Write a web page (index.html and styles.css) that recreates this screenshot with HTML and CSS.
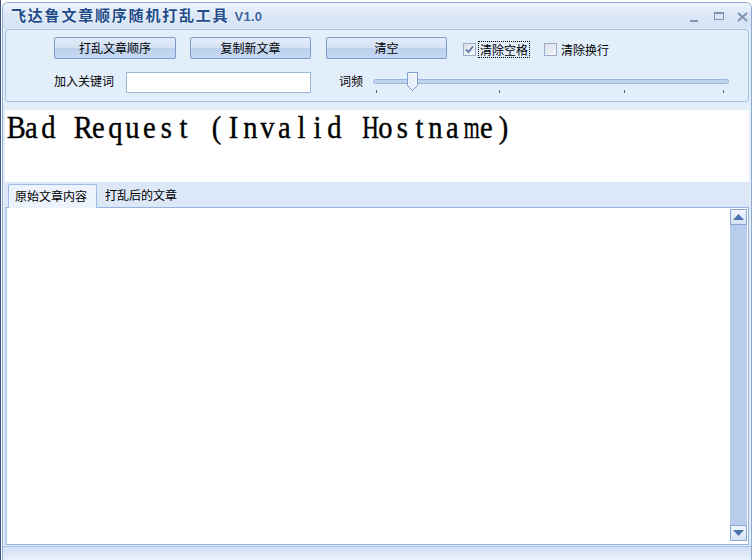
FILE: index.html
```html
<!DOCTYPE html>
<html>
<head>
<meta charset="utf-8">
<link rel="stylesheet" href="styles.css">
</head>
<body>
<div class="desk">
  <div class="window">
    <div class="titlebar">
      <span class="title">飞达鲁文章顺序随机打乱工具 <span class="ver">V1.0</span></span>
      <div class="controls">
        <span class="ctl min"></span>
        <span class="ctl max"></span>
        <svg class="ctl close" width="11" height="10" viewBox="0 0 11 10"><path d="M1 1 L10 9 M10 1 L1 9" stroke="#8194b2" stroke-width="2"/></svg>
      </div>
    </div>
    <div class="group">
      <div class="row1">
        <button class="btn b1">打乱文章顺序</button>
        <button class="btn b2">复制新文章</button>
        <button class="btn b3">清空</button>
        <span class="chk checked"><svg width="9" height="9" viewBox="0 0 9 9"><path d="M1 4.5 L3.5 7 L8 1.5" fill="none" stroke="#4f6f9f" stroke-width="1.6"/></svg></span>
        <span class="lbl focus">清除空格</span>
        <span class="chk c2"></span>
        <span class="lbl">清除换行</span>
      </div>
      <div class="row2">
        <span class="kw">加入关键词</span>
        <span class="input"></span>
        <span class="freq">词频</span>
        <div class="slider">
          <div class="track"></div>
          <div class="thumb"><svg width="11" height="19" viewBox="0 0 11 19"><path d="M0.5 0.5 H10.5 V13.5 L5.5 18.5 L0.5 13.5 Z" fill="#eaf1fb" stroke="#7d9ccb"/><path d="M2 2 H9 V13" fill="none" stroke="#ffffff"/></svg></div>
          <div class="ticks"><i class="t1"></i><i class="t2"></i><i class="t3"></i><i class="t4"></i></div>
        </div>
      </div>
    </div>
    <div class="web"><span>B</span><span>a</span><span>d</span><span> </span><span>R</span><span>e</span><span>q</span><span>u</span><span>e</span><span>s</span><span>t</span><span> </span><span>(</span><span>I</span><span>n</span><span>v</span><span>a</span><span>l</span><span>i</span><span>d</span><span> </span><span class="h">H</span><span>o</span><span>s</span><span>t</span><span>n</span><span>a</span><span class="w">m</span><span>e</span><span>)</span></div>
    <div class="tabs">
      <span class="tab active">原始文章内容</span>
      <span class="tab">打乱后的文章</span>
    </div>
    <div class="page">
      <div class="text"></div>
      <div class="scroll">
        <div class="sbtn"><svg width="11" height="6" viewBox="0 0 11 6"><path d="M0 6 L5.5 0 L11 6 Z" fill="#4f73ad"/></svg></div>
        <div class="strack"></div>
        <div class="sbtn"><svg width="11" height="6" viewBox="0 0 11 6"><path d="M0 0 L5.5 6 L11 0 Z" fill="#4f73ad"/></svg></div>
      </div>
    </div>
    <div class="status"></div>
  </div>
</div>
</body>
</html>
```
FILE: styles.css
```css
* { box-sizing: border-box; }
html, body { margin: 0; padding: 0; }
body {
  width: 752px;
  height: 560px;
  overflow: hidden;
  background: #ffffff;
  font-family: "Noto Sans CJK SC", "DejaVu Sans", sans-serif;
  font-size: 12px;
  color: #000;
}
.desk {
  height: 560px;
  border-left: 1px solid #3a5186;
  padding-top: 2px;
  padding-left: 1px;
}
.window {
  width: 750px;
  height: 558px;
  background: #e2edfa;
  border: 1px solid #8ea9d0;
  border-bottom: none;
  border-radius: 6px 6px 0 0;
  display: flex;
  flex-direction: column;
  padding: 0 1px;
}
.titlebar {
  height: 25px;
  flex: none;
  display: flex;
  align-items: center;
  justify-content: space-between;
  background: linear-gradient(#eef4fc, #dbe7f7 45%, #d4e3f6);
  margin: 0 -1px;
  border-radius: 5px 5px 0 0;
  padding: 0 0 0 8px;
}
.title {
  font-weight: bold;
  font-size: 15px;
  color: #1f4c8a;
  letter-spacing: 1.8px;
  text-shadow: 0 0 3px #ffffff;
  line-height: 20px;
  margin-top: 1px;
  white-space: nowrap;
}
.ver {
  font-family: "Liberation Sans", "DejaVu Sans", sans-serif;
  font-size: 13px;
  letter-spacing: 0.2px;
  color: #3a64a0;
}
.controls {
  display: flex;
  align-items: center;
  padding-right: 3px;
  height: 25px;
}
.ctl { display: block; }
.min {
  width: 8px; height: 2px;
  background: #8194b2;
  margin-top: 10px;
  margin-right: 16px;
}
.max {
  width: 10px; height: 8px;
  border: 1px solid #8194b2;
  border-top-width: 2px;
  margin-right: 13px;
  margin-top: 1px;
}
.close { margin-top: 2px; }
.group {
  flex: none;
  height: 73px;
  margin: 1px 1px 0 1px;
  border: 1px solid #a8c2e6;
  border-radius: 3px;
  background: #e3eefb;
  padding: 7px 0 0 48px;
}
.row1 {
  display: flex;
  align-items: center;
  height: 22px;
}
.btn {
  font-family: inherit;
  font-size: 12px;
  height: 22px;
  padding: 0;
  border: 1px solid #7e9ac6;
  border-radius: 2px;
  background: linear-gradient(#e4edf9, #d3e1f4 50%, #bdd1ee 51%, #c6d8f1);
  color: #000;
  line-height: 18px;
}
.b1 { width: 122px; }
.b2 { width: 121px; margin-left: 14px; }
.b3 { width: 121px; margin-left: 15px; }
.chk {
  width: 13px; height: 13px;
  border: 1px solid #9aaecb;
  background: linear-gradient(135deg, #d8dde6, #f6f8fb);
  display: flex;
  align-items: center;
  justify-content: center;
  margin-top: 2px;
}
.checked { margin-left: 16px; }
.c2 { margin-left: 15px; }
.lbl {
  margin-left: 3px;
  padding: 0 1px;
  line-height: 15px;
  margin-top: 2px;
}
.focus { outline: 1px dotted #000; outline-offset: 0; }
.row2 {
  display: flex;
  align-items: flex-start;
  margin-top: 13px;
  height: 30px;
}
.kw { line-height: 20px; margin-top: -1px; }
.input {
  width: 185px;
  height: 21px;
  border: 1px solid #9cb6dc;
  background: #ffffff;
  margin-left: 12px;
}
.freq { margin-left: 28px; line-height: 20px; margin-top: -1px; }
.slider {
  margin-left: 10px;
  width: 356px;
  height: 28px;
  display: flex;
  flex-direction: column;
  position: relative;
}
.track {
  margin-top: 7px;
  height: 5px;
  border: 1px solid #9ab5dd;
  border-radius: 3px;
  background: #c2d5ef;
}
.thumb {
  position: absolute;
  left: 34px;
  top: 0;
  width: 11px;
  height: 19px;
}
.thumb svg { display: block; }
.ticks {
  display: flex;
  margin-top: 6px;
}
.ticks i {
  display: block;
  width: 1px;
  height: 3px;
  background: #4c5f7c;
}
.t1 { margin-left: 3px; }
.t2 { margin-left: 122px; }
.t3 { margin-left: 124px; }
.t4 { margin-left: 98px; }
.web {
  flex: none;
  height: 72px;
  margin: 8px 1px 0 1px;
  background: #ffffff;
  font-family: "Liberation Serif", "DejaVu Serif", serif;
  font-size: 31px;
  line-height: 36px;
  padding-left: 1px;
  white-space: nowrap;
  overflow: hidden;
  color: #000;
  display: flex;
  align-items: flex-start;
  -webkit-text-stroke: 0.4px #000;
}
.web span {
  display: block;
  width: 16.87px;
  flex: none;
  text-align: center;
  white-space: pre;
  transform: scaleX(0.92);
}
.web span.h { transform: scaleX(0.74); }
.web span.w { transform: scaleX(0.66); }
.tabs {
  flex: none;
  height: 26px;
  margin: 0 1px;
  background: #dce8f8;
  display: flex;
  align-items: flex-end;
  padding-left: 3px;
  border-bottom: 1px solid #96b4de;
}
.tab {
  height: 23px;
  line-height: 22px;
  padding: 0 8px;
}
.tab.active {
  width: 89px;
  padding: 0 0 0 6px;
  background: #ecf3fc;
  border: 1px solid #9fbbe2;
  border-bottom: none;
  border-radius: 2px 2px 0 0;
  height: 24px;
  margin-bottom: -1px;
}
.tab + .tab { padding-left: 8px; }
.page {
  flex: none;
  height: 337px;
  margin: 0 1px;
  border: 1px solid #96b4de;
  border-top: none;
  background: #ffffff;
  display: flex;
  padding: 1px 1px 3px 2px;
  border-left: 2px solid #b9cfee;
}
.text { flex: 1; background: #ffffff; }
.scroll {
  width: 17px;
  display: flex;
  flex-direction: column;
  background: #b8cdec;
}
.sbtn {
  height: 16px;
  border: 1px solid #86a6d6;
  background: linear-gradient(#f2f6fd, #d5e3f6);
  display: flex;
  align-items: center;
  justify-content: center;
}
.strack { flex: 1; background: #b8cdec; }
.status {
  flex: 1;
  margin: 1px -1px 0 -1px;
  border-top: 1px solid #a9c3e6;
  background: linear-gradient(#cfdff4, #eaf2fc);
}
```
